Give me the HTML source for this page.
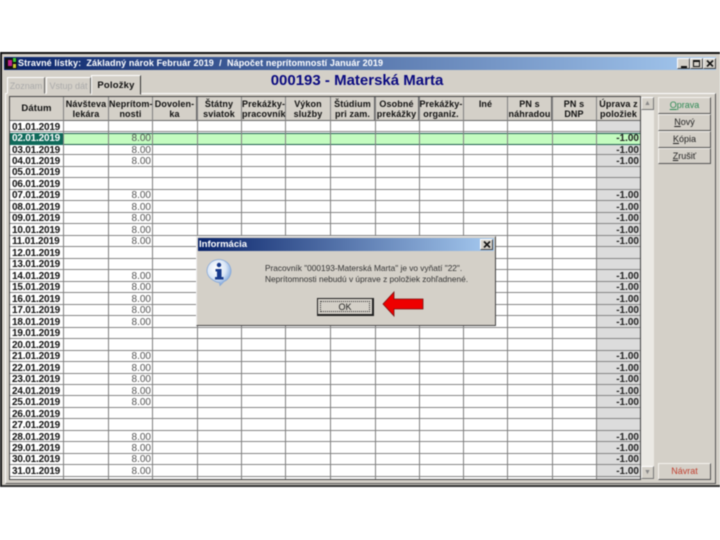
<!DOCTYPE html>
<html><head><meta charset="utf-8">
<style>
html,body{margin:0;padding:0;background:#fff;}
body{width:720px;height:540px;overflow:hidden;position:relative;font-family:"Liberation Sans",sans-serif;}
#root{position:absolute;left:0;top:0;width:720px;height:540px;filter:blur(0.4px);}
.a{position:absolute;}
.h{position:absolute;top:97px;height:24px;background:#d4d0c8;border-right:1px solid #666;font:bold 9px/10px "Liberation Sans",sans-serif;text-align:center;color:#111;padding-top:2px;box-sizing:border-box;letter-spacing:.12px;white-space:nowrap;overflow:hidden;}
.r{position:absolute;left:10px;width:630px;height:11.48px;border-bottom:1px solid #858585;box-sizing:border-box;}
.d{position:absolute;left:2px;top:.5px;font:bold 10px/12px "Liberation Sans",sans-serif;color:#111;letter-spacing:-.2px;}
.n{position:absolute;left:109px;width:32px;top:.5px;text-align:right;font:10px/12px "Liberation Sans",sans-serif;color:#555;}
.m{position:absolute;left:587px;width:43px;height:11px;top:0;}
.m b{position:absolute;right:1px;top:.5px;font:bold 10px/12px "Liberation Sans",sans-serif;color:#222;}
.v{position:absolute;top:97px;height:382px;width:1px;background:#808080;}
.b{position:absolute;left:658px;width:53px;background:#d4d0c8;border:1px solid;border-color:#f4f2ee #555 #555 #f4f2ee;box-sizing:border-box;text-align:center;font:9px/15px "Liberation Sans",sans-serif;color:#222;}
.w{position:absolute;top:58px;width:13px;height:11px;background:#d4d0c8;border:1px solid;border-color:#fff #444 #444 #fff;box-sizing:border-box;}
.t{position:absolute;background:#d4d0c8;border:1px solid;border-color:#fff #666 #d4d0c8 #fff;box-sizing:border-box;text-align:center;white-space:nowrap;}
</style></head><body>
<div id="root">
<div class="a" style="left:0;top:52px;width:720px;height:435px;background:#d4d0c8;border-top:2px solid #111;border-bottom:2px solid #333;border-left:2px solid #111;box-sizing:border-box;"></div>
<div class="a" style="left:4px;top:57px;width:712px;height:13px;background:linear-gradient(90deg,#0a246a,#a6caf0);"></div>
<div class="a" style="left:5px;top:58px;width:12px;height:11px;background:#111;"></div>
<div class="a" style="left:8px;top:60px;width:4px;height:6px;background:#c2208a;"></div>
<div class="a" style="left:13px;top:58px;width:3px;height:4px;background:#3c3;"></div>
<div class="a" style="left:13px;top:64px;width:3px;height:4px;background:#cc3;"></div>
<div class="a" style="left:18px;top:57px;color:#fff;font:bold 9px/13px 'Liberation Sans',sans-serif;letter-spacing:.11px;white-space:pre;">Stravné lístky:  Základný nárok Február 2019  /  Nápočet neprítomností Január 2019</div>
<div class="w" style="left:677px;"><span class="a" style="left:3px;top:7px;width:6px;height:2px;background:#111;"></span></div>
<div class="w" style="left:690px;"><span class="a" style="left:2px;top:1px;width:7px;height:7px;border:1px solid #111;border-top-width:2px;box-sizing:border-box;"></span></div>
<div class="w" style="left:703px;"><svg class="a" style="left:2px;top:1px;" width="8" height="7" viewBox="0 0 8 7"><path d="M1 0.500L7 6.500M7 0.500L1 6.500" stroke="#111" stroke-width="1.600" fill="none"/></svg></div>

<div class="a" style="left:5px;top:93px;width:711px;height:391px;border:1px solid;border-color:#fff #555 #555 #fff;box-sizing:border-box;"></div>
<div class="t" style="left:7px;top:77px;width:38px;height:17px;color:#aaa;font:9px/17px 'Liberation Sans',sans-serif;">Zoznam</div>
<div class="t" style="left:46px;top:77px;width:45px;height:17px;color:#aaa;font:9px/17px 'Liberation Sans',sans-serif;">Vstup dát</div>
<div class="t" style="left:91px;top:75px;width:50px;height:20px;color:#111;font:bold 9.5px/19px 'Liberation Sans',sans-serif;letter-spacing:.2px;border-right-color:#333;">Položky</div>
<div class="a" style="left:150px;top:71px;width:414px;text-align:center;font:bold 15px/20px 'Liberation Sans',sans-serif;color:#0a0a80;">000193 - Materská Marta</div>

<div class="a" style="left:9px;top:96px;width:632px;height:384px;background:#fff;border:1px solid #444;box-sizing:border-box;"></div>
<div class="a" style="left:597px;top:121px;width:43px;height:358px;background:#dcdcdc;"></div>

<div class="h" style="left:10px;width:54px;line-height:24px;padding-top:0;font-size:9.5px;">Dátum</div>
<div class="h" style="left:64px;width:45px;">Návšteva<br>lekára</div>
<div class="h" style="left:109px;width:44px;">Neprítom-<br>nosti</div>
<div class="h" style="left:153px;width:44px;">Dovolen-<br>ka</div>
<div class="h" style="left:197px;width:45px;">Štátny<br>sviatok</div>
<div class="h" style="left:242px;width:44px;">Prekážky-<br>pracovník</div>
<div class="h" style="left:286px;width:45px;">Výkon<br>služby</div>
<div class="h" style="left:331px;width:44px;">Štúdium<br>pri zam.</div>
<div class="h" style="left:375px;width:44px;">Osobné<br>prekážky</div>
<div class="h" style="left:419px;width:45px;">Prekážky-<br>organiz.</div>
<div class="h" style="left:464px;width:44px;">Iné</div>
<div class="h" style="left:508px;width:44px;">PN s<br>náhradou</div>
<div class="h" style="left:552px;width:45px;">PN s<br>DNP</div>
<div class="h" style="left:597px;width:43px;border-right:0;">Úprava z<br>položiek</div>
<div class="a" style="left:10px;top:120px;width:630px;height:1px;background:#666;"></div>

<div class="r" style="top:121px;"><span class="d">01.01.2019</span></div>
<div class="r" style="top:132.5px;background:#c4fcc0;border-top:1px solid #1f5f4f;border-bottom:1px solid #1f5f4f;height:12px;"><span class="a" style="left:0;top:-1px;width:54px;height:12px;background:#0f6a5a;"></span><span class="d" style="color:#fff;top:-1px;">02.01.2019</span><span class="n" style="top:-1px;">8.00</span><b class="a" style="right:1px;top:-1px;font:bold 10px/12px 'Liberation Sans',sans-serif;color:#222;">-1.00</b></div>
<div class="r" style="top:144px;"><span class="d">03.01.2019</span><span class="n">8.00</span><span class="m"><b>-1.00</b></span></div>
<div class="r" style="top:155.4px;"><span class="d">04.01.2019</span><span class="n">8.00</span><span class="m"><b>-1.00</b></span></div>
<div class="r" style="top:166.9px;"><span class="d">05.01.2019</span></div>
<div class="r" style="top:178.4px;"><span class="d">06.01.2019</span></div>
<div class="r" style="top:189.9px;"><span class="d">07.01.2019</span><span class="n">8.00</span><span class="m"><b>-1.00</b></span></div>
<div class="r" style="top:201.4px;"><span class="d">08.01.2019</span><span class="n">8.00</span><span class="m"><b>-1.00</b></span></div>
<div class="r" style="top:212.8px;"><span class="d">09.01.2019</span><span class="n">8.00</span><span class="m"><b>-1.00</b></span></div>
<div class="r" style="top:224.3px;"><span class="d">10.01.2019</span><span class="n">8.00</span><span class="m"><b>-1.00</b></span></div>
<div class="r" style="top:235.8px;"><span class="d">11.01.2019</span><span class="n">8.00</span><span class="m"><b>-1.00</b></span></div>
<div class="r" style="top:247.3px;"><span class="d">12.01.2019</span></div>
<div class="r" style="top:258.8px;"><span class="d">13.01.2019</span></div>
<div class="r" style="top:270.2px;"><span class="d">14.01.2019</span><span class="n">8.00</span><span class="m"><b>-1.00</b></span></div>
<div class="r" style="top:281.7px;"><span class="d">15.01.2019</span><span class="n">8.00</span><span class="m"><b>-1.00</b></span></div>
<div class="r" style="top:293.2px;"><span class="d">16.01.2019</span><span class="n">8.00</span><span class="m"><b>-1.00</b></span></div>
<div class="r" style="top:304.7px;"><span class="d">17.01.2019</span><span class="n">8.00</span><span class="m"><b>-1.00</b></span></div>
<div class="r" style="top:316.2px;"><span class="d">18.01.2019</span><span class="n">8.00</span><span class="m"><b>-1.00</b></span></div>
<div class="r" style="top:327.6px;"><span class="d">19.01.2019</span></div>
<div class="r" style="top:339.1px;"><span class="d">20.01.2019</span></div>
<div class="r" style="top:350.6px;"><span class="d">21.01.2019</span><span class="n">8.00</span><span class="m"><b>-1.00</b></span></div>
<div class="r" style="top:362.1px;"><span class="d">22.01.2019</span><span class="n">8.00</span><span class="m"><b>-1.00</b></span></div>
<div class="r" style="top:373.6px;"><span class="d">23.01.2019</span><span class="n">8.00</span><span class="m"><b>-1.00</b></span></div>
<div class="r" style="top:385px;"><span class="d">24.01.2019</span><span class="n">8.00</span><span class="m"><b>-1.00</b></span></div>
<div class="r" style="top:396.5px;"><span class="d">25.01.2019</span><span class="n">8.00</span><span class="m"><b>-1.00</b></span></div>
<div class="r" style="top:408px;"><span class="d">26.01.2019</span></div>
<div class="r" style="top:419.5px;"><span class="d">27.01.2019</span></div>
<div class="r" style="top:431px;"><span class="d">28.01.2019</span><span class="n">8.00</span><span class="m"><b>-1.00</b></span></div>
<div class="r" style="top:442.4px;"><span class="d">29.01.2019</span><span class="n">8.00</span><span class="m"><b>-1.00</b></span></div>
<div class="r" style="top:453.9px;"><span class="d">30.01.2019</span><span class="n">8.00</span><span class="m"><b>-1.00</b></span></div>
<div class="r" style="top:465.4px;"><span class="d">31.01.2019</span><span class="n">8.00</span><span class="m"><b>-1.00</b></span></div>

<div class="v" style="left:63px;"></div><div class="v" style="left:108px;"></div><div class="v" style="left:152px;"></div><div class="v" style="left:197px;"></div><div class="v" style="left:241px;"></div><div class="v" style="left:285px;"></div><div class="v" style="left:330px;"></div><div class="v" style="left:375px;"></div><div class="v" style="left:419px;"></div><div class="v" style="left:463px;"></div><div class="v" style="left:507px;"></div><div class="v" style="left:552px;"></div><div class="v" style="left:596px;"></div>

<div class="a" style="left:641px;top:97px;width:13px;height:382px;background:#ebe9e4;"></div>
<div class="a" style="left:641px;top:97px;width:13px;height:13px;background:#d4d0c8;border:1px solid;border-color:#fff #777 #777 #fff;box-sizing:border-box;color:#888;font:7px/11px 'Liberation Sans',sans-serif;text-align:center;">▲</div>
<div class="a" style="left:641px;top:466px;width:13px;height:13px;background:#d4d0c8;border:1px solid;border-color:#fff #777 #777 #fff;box-sizing:border-box;color:#888;font:7px/11px 'Liberation Sans',sans-serif;text-align:center;">▼</div>

<div class="b" style="top:97px;height:17px;color:#2f8a55;"><u>O</u>prava</div>
<div class="b" style="top:114px;height:17px;"><u>N</u>ový</div>
<div class="b" style="top:131px;height:17px;"><u>K</u>ópia</div>
<div class="b" style="top:148px;height:16px;"><u>Z</u>rušiť</div>
<div class="b" style="top:463px;height:17px;color:#c04030;">Návrat</div>

<div class="a" style="left:196px;top:236px;width:300px;height:90px;background:#d4d0c8;border:1px solid;border-color:#eee #444 #444 #eee;box-sizing:border-box;"></div>
<div class="a" style="left:198px;top:238px;width:296px;height:13px;background:linear-gradient(90deg,#0a246a,#a6caf0);"></div>
<div class="a" style="left:199px;top:238px;color:#fff;font:bold 9.5px/13px 'Liberation Sans',sans-serif;">Informácia</div>
<div class="w" style="left:480px;top:239px;"><svg class="a" style="left:2px;top:1px;" width="8" height="7" viewBox="0 0 8 7"><path d="M1 0.500L7 6.500M7 0.500L1 6.500" stroke="#111" stroke-width="1.600" fill="none"/></svg></div>
<svg class="a" style="left:206px;top:259px;" width="26" height="28" viewBox="0 0 26 28">
<defs><radialGradient id="g" cx=".4" cy=".35" r=".7"><stop offset="0" stop-color="#ffffff"/><stop offset=".55" stop-color="#dbe7f6"/><stop offset="1" stop-color="#6f9bd8"/></radialGradient></defs>
<path d="M7 21C2 18 1 14 1 12A12 11.500 0 1 1 18 22.500L14 26.500L13.500 23.500C11 23.500 9 22.500 7 21Z" fill="url(#g)" stroke="#86a8d8" stroke-width=".8"/>
<circle cx="13" cy="6" r="2.200" fill="#173a8c"/>
<path d="M9.500 10H15.500V18H17.500V20.500H9V18H11V12.500H9.500Z" fill="#173a8c"/>
</svg>
<div class="a" style="left:265px;top:263px;color:#333;font:8.3px/11px 'Liberation Sans',sans-serif;white-space:nowrap;">Pracovník "000193-Materská Marta" je vo vyňatí "22".<br>Neprítomnosti nebudú v úprave z položiek zohľadnené.</div>
<div class="a" style="left:317px;top:298px;width:57px;height:18px;border:1px solid #222;border-right-width:2px;border-bottom-width:2px;box-sizing:border-box;background:#d4d0c8;text-align:center;font:9px/16px 'Liberation Sans',sans-serif;color:#222;"><span class="a" style="left:2px;top:2px;right:2px;bottom:2px;border:1px dotted #333;"></span>OK</div>
<svg class="a" style="left:382px;top:291px;" width="42" height="26" viewBox="0 0 42 26"><path d="M1 13L12 1V8H41V18H12V25Z" fill="#ee0000" stroke="#7a1010" stroke-width=".8"/></svg>
</div>
</body></html>
